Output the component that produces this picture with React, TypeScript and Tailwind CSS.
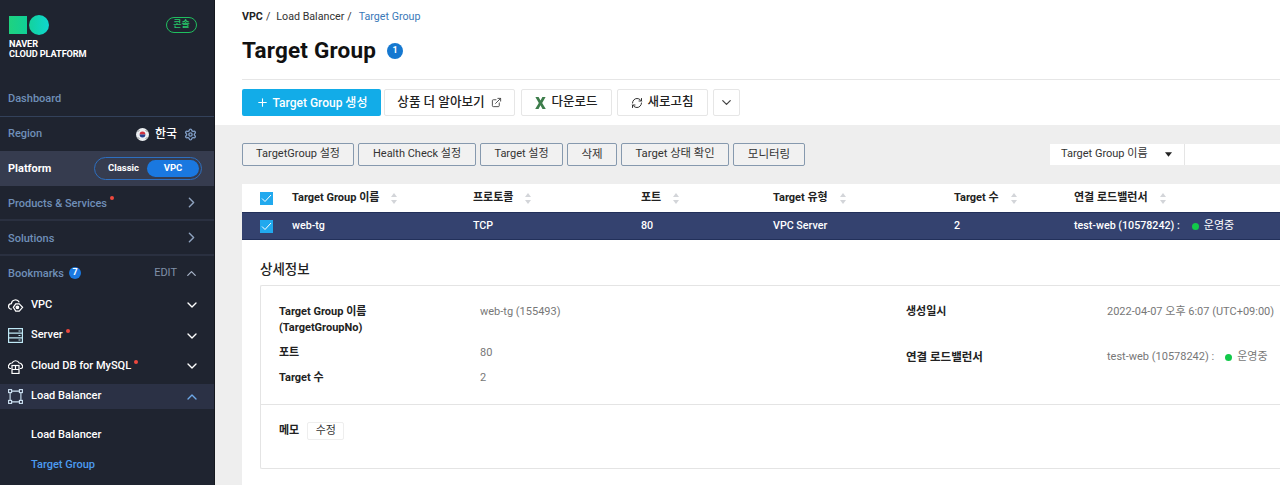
import React from "react";
import { ChevronRight, ChevronDown, ChevronUp, Plus, ExternalLink, RefreshCw, Settings } from "lucide-react";

const FONT = "font-['Roboto','Noto_Sans_CJK_KR',sans-serif]";

function Dot() {
  return <span className="ml-[3px] mb-[9px] inline-block h-[4px] w-[4px] rounded-full bg-[#f0483e]" />;
}

function Sort() {
  return (
    <svg width="6" height="11" viewBox="0 0 6 11" className="ml-[12px] shrink-0">
      <path d="M3 0 L6 4 L0 4 Z M0 7 L6 7 L3 11 Z" fill="#d3d5d9" />
    </svg>
  );
}

function Check() {
  return (
    <span className="flex h-[13px] w-[13px] items-center justify-center bg-[#21a9ee]">
      <svg width="11" height="9" viewBox="0 0 11 9" fill="none">
        <path d="M1 4.5 L4 7.5 L10 1" stroke="#fff" strokeWidth="1" />
      </svg>
    </span>
  );
}

function VpcIcon() {
  return (
    <svg width="16" height="13" viewBox="0 0 17 14" fill="none" stroke="#fff" strokeWidth="1.3">
      <path d="M4 11 H3.5 A3 3 0 0 1 3.5 5 A4.5 4.5 0 0 1 12 3.5" />
      <path d="M12 5.2 L15.6 9 L12 13 L8.2 13 L5.6 9 L8.2 5.2 Z" />
      <circle cx="10" cy="9" r="1.4" fill="#fff" />
    </svg>
  );
}

function ServerIcon() {
  return (
    <svg width="15" height="15" viewBox="0 0 15 15" fill="none" stroke="#bfe8f5" strokeWidth="1.2">
      <rect x="0.6" y="0.6" width="13.8" height="13.8" />
      <path d="M0.6 5.2 H14.4 M0.6 9.8 H14.4 M10.5 3 H12.5 M10.5 7.5 H12.5 M10.5 12 H12.5" />
    </svg>
  );
}

function DbIcon() {
  return (
    <svg width="15" height="15" viewBox="0 0 15 15" fill="none" stroke="#fff" strokeWidth="1.2">
      <path d="M3 9.5 H2.5 A2 2 0 0 1 1 6 A3 3 0 0 1 4 4 A4 4 0 0 1 11.2 4 A3 3 0 0 1 14 6 A2 2 0 0 1 12.5 9.5 H12" />
      <rect x="4" y="6.5" width="7" height="8" />
      <path d="M4 10.5 H11 M7.5 6.5 V10.5" />
    </svg>
  );
}

function LbIcon() {
  return (
    <svg width="15" height="15" viewBox="0 0 15 15" fill="none" stroke="#cfe4f5" strokeWidth="1.1">
      <rect x="0.6" y="0.6" width="3" height="3" />
      <rect x="11.4" y="0.6" width="3" height="3" />
      <rect x="0.6" y="11.4" width="3" height="3" />
      <rect x="11.4" y="11.4" width="3" height="3" />
      <path d="M3.6 2.1 H11.4 M3.6 12.9 H11.4 M2.1 3.6 V11.4 M12.9 3.6 V11.4" />
    </svg>
  );
}

function ExcelX() {
  return (
    <svg width="11" height="12" viewBox="0 0 11 12">
      <path d="M0.4 0 H3.6 L5.5 3.6 L7.4 0 H10.6 L7.2 5.9 L10.8 12 H7.5 L5.5 8.2 L3.5 12 H0.2 L3.8 5.9 Z" fill="#3d7d4b" />
    </svg>
  );
}

function Flag() {
  return (
    <svg width="13" height="13" viewBox="0 0 13 13">
      <circle cx="6.5" cy="6.5" r="6.5" fill="#eceff2" />
      <path d="M3.6 6.5 A2.9 2.9 0 0 1 9.4 6.5 Z" fill="#d0313e" />
      <path d="M3.6 6.5 A2.9 2.9 0 0 0 9.4 6.5 Z" fill="#24408e" />
      <path d="M2 3.5 L3 2.5 M11 3.5 L10 2.5 M2 9.5 L3 10.5 M11 9.5 L10 10.5" stroke="#333" strokeWidth="1" />
    </svg>
  );
}

function SideRow({ icon, label, dot, open, active }: { icon: React.ReactNode; label: string; dot?: boolean; open?: boolean; active?: boolean }) {
  return (
    <div className={`flex h-[25px] items-center pl-[8px] pr-[14px] ${active ? "bg-[#2b3145]" : ""}`}>
      <span className="flex w-[23px] justify-start">{icon}</span>
      <span className="text-[11px] font-medium text-white">{label}</span>
      {dot && <Dot />}
      <span className="ml-auto">
        {open ? <ChevronUp size={16} className="text-[#6ea8e8]" /> : <ChevronDown size={16} className="text-white" />}
      </span>
    </div>
  );
}

function Sidebar() {
  return (
    <aside className="flex h-[485px] w-[215px] shrink-0 flex-col overflow-hidden border-r border-r-[#15181f] bg-[#1f2430]">
      <div className="flex h-[82px] shrink-0 justify-between pl-[9px] pr-[17px] pt-[15px]">
        <div>
          <div className="flex items-center gap-[2px]">
            <span className="h-[18px] w-[18px] bg-gradient-to-r from-[#1fd27f] to-[#0fcf97]" />
            <span className="h-[20px] w-[20px] rounded-full bg-gradient-to-r from-[#14d29c] to-[#10d6cf]" />
          </div>
          <div className="mt-[4px] text-[9.2px] font-bold leading-[9.5px] tracking-[-0.1px] text-white">
            NAVER
            <br />
            CLOUD PLATFORM
          </div>
        </div>
        <span className="mt-[2px] flex h-[16px] w-[31px] items-center justify-center rounded-full border border-[#1fbf5f] text-[9px] font-medium text-[#27c96b]">
          콘솔
        </span>
      </div>
      <div className="flex h-[35px] shrink-0 items-center border-b border-b-[#33415a] px-[8px] text-[11px] font-medium text-[#6f8fb8]">
        Dashboard
      </div>
      <div className="flex h-[34px] shrink-0 items-center px-[8px] pr-[17px] text-[11px] font-medium text-[#6f8fb8]">
        Region
        <span className="ml-auto flex items-center">
          <Flag />
          <span className="ml-[6px] text-[12px] text-white">한국</span>
          <Settings size={13} strokeWidth={2.6} className="ml-[7px] text-[#7f9cc4]" />
        </span>
      </div>
      <div className="flex h-[35px] shrink-0 items-center justify-between bg-[#363c4f] pl-[8px] pr-[12px]">
        <span className="pt-[2px] text-[11px] font-bold text-white">Platform</span>
        <div className="flex h-[23px] w-[108px] items-center rounded-full border border-[#2d6fc0] p-[2px] text-[9.5px] font-bold text-white">
          <span className="flex-1 pl-[3px] text-center">Classic</span>
          <span className="flex h-[17px] w-[52px] items-center justify-center rounded-full bg-[#1a78e0]">VPC</span>
        </div>
      </div>
      <div className="flex h-[35px] shrink-0 items-center border-b-2 border-b-[#2a3040] pl-[8px] pr-[14px] text-[11px] font-medium text-[#6f8fb8]">
        <span className="pt-[4px]">Products &amp; Services</span>
        <Dot />
        <ChevronRight size={17} className="ml-auto text-[#8fa3bf]" />
      </div>
      <div className="flex h-[35px] shrink-0 items-center border-b-2 border-b-[#2a3040] pl-[8px] pr-[14px] text-[11px] font-medium text-[#6f8fb8]">
        <span className="pt-[4px]">Solutions</span>
        <ChevronRight size={17} className="ml-auto text-[#8fa3bf]" />
      </div>
      <div className="flex h-[34px] shrink-0 items-center pl-[8px] pr-[15px] text-[11px] font-medium text-[#6f8fb8]">
        <span className="pt-[2px]">Bookmarks</span>
        <span className="ml-[5px] flex h-[12px] w-[12px] items-center justify-center rounded-full bg-[#1a78e0] text-[9px] font-bold text-white">
          7
        </span>
        <span className="ml-auto text-[11px] font-normal text-[#8090a8]">EDIT</span>
        <ChevronUp size={15} className="ml-[7px] text-[#a8b4c8]" />
      </div>
      <div className="mt-[2.5px] flex flex-col gap-[5.5px]">
        <SideRow icon={<VpcIcon />} label="VPC" />
        <SideRow icon={<ServerIcon />} label="Server" dot />
        <SideRow icon={<DbIcon />} label="Cloud DB for MySQL" dot />
        <SideRow icon={<LbIcon />} label="Load Balancer" open active />
      </div>
      <div className="mt-[17.5px] pl-[31px] text-[11px] font-medium text-white">Load Balancer</div>
      <div className="mt-[14px] pl-[31px] text-[11px] font-medium text-[#4c9bf0]">Target Group</div>
    </aside>
  );
}

function TopBtn({ children, primary, w }: { children: React.ReactNode; primary?: boolean; w: string }) {
  return (
    <button
      className={`flex h-[27px] items-center justify-center rounded-[2px] text-[12px] font-medium ${w} ${
        primary ? "bg-[#12ace8] text-white" : "border border-[#e6e6e6] bg-white text-[#222]"
      }`}
    >
      {children}
    </button>
  );
}

function ActBtn({ children, w }: { children: React.ReactNode; w: string }) {
  return (
    <button className={`flex h-[23px] items-center justify-center rounded-[2px] border border-[#8699ae] bg-[#f1f1f1] text-[11px] text-[#333] ${w}`}>
      {children}
    </button>
  );
}

const COLS = ["w-[181px]", "w-[168px]", "w-[132px]", "w-[181px]", "w-[120px]", "flex-1"];
const HEAD = ["Target Group 이름", "프로토콜", "포트", "Target 유형", "Target 수", "연결 로드밸런서"];

function App() {
  return (
    <div className={`flex h-[485px] w-[1280px] overflow-hidden bg-[#eeeeee] ${FONT}`}>
      <Sidebar />
      <main className="flex min-w-0 flex-1 flex-col">
        <header className="h-[125px] shrink-0 bg-white pl-[27px]">
          <div className="flex h-[34px] items-center text-[10.7px] text-[#333]">
            <span className="font-bold text-[#222]">VPC</span>
            <span className="ml-[3px]">/</span>
            <span className="ml-[6px]">Load Balancer</span>
            <span className="ml-[3px]">/</span>
            <span className="ml-[7px] text-[#3a78b8]">Target Group</span>
          </div>
          <div className="flex h-[34px] items-center">
            <h1 className="text-[22.5px] font-bold tracking-[0.2px] text-[#111]">Target Group</h1>
            <span className="ml-[11px] flex h-[16px] w-[16px] items-center justify-center rounded-full bg-[#1578d0] text-[9px] font-bold text-white">
              1
            </span>
          </div>
          <div className="mt-[11px] border-t border-t-[#e6e6e6] pt-[9px]">
            <div className="flex">
              <TopBtn primary w="w-[139px]">
                <Plus size={13} className="mr-[4px]" />
                Target Group 생성
              </TopBtn>
              <span className="w-[3px]" />
              <TopBtn w="w-[131px]">
                <span className="text-[12.6px]">상품 더 알아보기</span>
                <ExternalLink size={11} className="ml-[6px] text-[#444]" />
              </TopBtn>
              <span className="w-[6px]" />
              <TopBtn w="w-[91px]">
                <ExcelX />
                <span className="ml-[5px] text-[12.5px]">다운로드</span>
              </TopBtn>
              <span className="w-[5px]" />
              <TopBtn w="w-[91px]">
                <RefreshCw size={12} className="mr-[4px] text-[#333]" />
                <span className="text-[12.5px]">새로고침</span>
              </TopBtn>
              <span className="w-[5px]" />
              <TopBtn w="w-[27px]">
                <ChevronDown size={15} className="text-[#444]" />
              </TopBtn>
            </div>
          </div>
        </header>

        <section className="flex min-h-0 flex-1 flex-col pl-[27px]">
          <div className="flex h-[59px] shrink-0 items-start pt-[18px]">
            <div className="flex gap-[4px]">
              <ActBtn w="w-[112px]">TargetGroup 설정</ActBtn>
              <ActBtn w="w-[118px]">Health Check 설정</ActBtn>
              <ActBtn w="w-[83px]">Target 설정</ActBtn>
              <ActBtn w="w-[50px]"><span className="text-[11.5px]">삭제</span></ActBtn>
              <ActBtn w="w-[108px]"><span className="text-[11.3px]">Target 상태 확인</span></ActBtn>
              <ActBtn w="w-[72px]"><span className="text-[11.5px]">모니터링</span></ActBtn>
            </div>
            <div className="ml-auto mt-[1px] flex h-[21px] w-[230px] bg-white text-[11px] text-[#333]">
              <div className="flex w-[135px] items-center border-r border-r-[#e5e5e5] pl-[11px] pr-[12px]">
                Target Group 이름
                <svg width="7" height="5" viewBox="0 0 8 5" className="ml-auto">
                  <path d="M0 0 H8 L4 5 Z" fill="#222" />
                </svg>
              </div>
            </div>
          </div>

          <div className="flex h-[28px] shrink-0 items-center bg-white text-[11px] font-bold text-[#222]">
            <span className="flex w-[50px] shrink-0 justify-center pr-[2px]">
              <Check />
            </span>
            {HEAD.map((h, i) => (
              <span key={h} className={`flex shrink-0 items-center ${COLS[i]}`}>
                {h}
                <Sort />
              </span>
            ))}
          </div>

          <div className="flex h-[28px] shrink-0 items-center border-y border-y-[#22305a] bg-[#34426f] text-[10.7px] font-medium text-white">
            <span className="flex w-[50px] shrink-0 justify-center pr-[2px]">
              <Check />
            </span>
            <span className={`shrink-0 ${COLS[0]}`}>web-tg</span>
            <span className={`shrink-0 ${COLS[1]}`}>TCP</span>
            <span className={`shrink-0 ${COLS[2]}`}>80</span>
            <span className={`shrink-0 ${COLS[3]}`}>VPC Server</span>
            <span className={`shrink-0 ${COLS[4]}`}>2</span>
            <span className={`flex shrink-0 items-center ${COLS[5]}`}>
              test-web (10578242) :
              <span className="ml-[12px] h-[7px] w-[7px] rounded-full bg-[#12c94a]" />
              <span className="ml-[5px] text-[11px] font-normal">운영중</span>
            </span>
          </div>

          <div className="min-h-0 flex-1 bg-white pl-[18px]">
            <h2 className="flex h-[45px] items-center pt-[14px] text-[13.5px] font-medium text-[#222]">상세정보</h2>
            <div className="h-[184px] rounded-l-[2px] border border-r-0 border-[#e4e4e4]">
              <div className="flex h-[119px] border-b border-b-[#e4e4e4] pl-[18px] text-[11px]">
                <div className="w-[627px] shrink-0 pt-[18px]">
                  <div className="flex h-[33px]">
                    <span className="w-[201px] font-bold leading-[16px] text-[#222]">
                      Target Group 이름
                      <br />
                      (TargetGroupNo)
                    </span>
                    <span className="leading-[16px] text-[#777]">web-tg (155493)</span>
                  </div>
                  <div className="mt-[8px] flex h-[25px]">
                    <span className="w-[201px] font-bold leading-[16px] text-[#222]">포트</span>
                    <span className="leading-[16px] text-[#777]">80</span>
                  </div>
                  <div className="flex">
                    <span className="w-[201px] font-bold leading-[16px] text-[#222]">Target 수</span>
                    <span className="leading-[16px] text-[#777]">2</span>
                  </div>
                </div>
                <div className="flex-1 pt-[18px]">
                  <div className="flex h-[45px]">
                    <span className="w-[201px] shrink-0 font-bold leading-[16px] text-[#222]">생성일시</span>
                    <span className="whitespace-nowrap leading-[16px] text-[#777]">2022-04-07 오후 6:07 (UTC+09:00)</span>
                  </div>
                  <div className="flex">
                    <span className="w-[201px] shrink-0 text-[11.5px] font-bold leading-[16px] text-[#222]">연결 로드밸런서</span>
                    <span className="flex items-center whitespace-nowrap leading-[16px] text-[#777]">
                      test-web (10578242) :
                      <span className="ml-[11px] h-[7px] w-[7px] rounded-full bg-[#12c94a]" />
                      <span className="ml-[5px]">운영중</span>
                    </span>
                  </div>
                </div>
              </div>
              <div className="flex items-start pl-[18px] pt-[17px] text-[11px]">
                <span className="font-bold leading-[17px] text-[#222]">메모</span>
                <button className="ml-[8px] flex h-[18px] w-[37px] items-center justify-center rounded-[2px] border border-[#eeeeee] text-[11px] text-[#333]">
                  수정
                </button>
              </div>
            </div>
          </div>
        </section>
      </main>
    </div>
  );
}

export default App;
